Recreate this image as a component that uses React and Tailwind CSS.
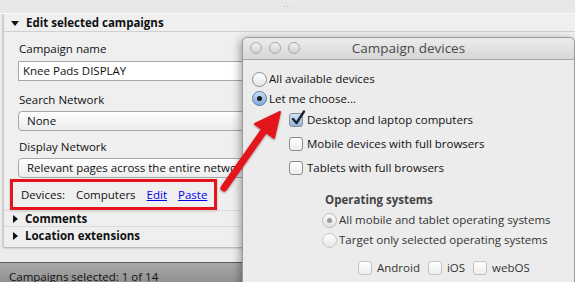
import React from "react";

function Radio({ checked, disabled }) {
  if (checked) {
    return (
      <span className={`inline-flex shrink-0 w-[15px] h-[15px] rounded-full items-center justify-center border ${disabled ? "border-[#bdbdbd] bg-gradient-to-b from-[#fafafa] to-[#e3e3e3]" : "border-[#5a7fa8] bg-gradient-to-b from-[#c9ddf4] to-[#7fa9dc]"}`}>
        <span className={`w-[5px] h-[5px] rounded-full ${disabled ? "bg-[#9a9a9a]" : "bg-[#1a1a1a]"}`} />
      </span>
    );
  }
  return (
    <span className={`inline-block shrink-0 w-[15px] h-[15px] rounded-full border ${disabled ? "border-[#c4c4c4]" : "border-[#8e8e8e]"} bg-gradient-to-b from-[#ffffff] to-[#e6e6e6]`} />
  );
}

function Check({ checked, disabled }) {
  return (
    <span className={`relative inline-block shrink-0 w-[14px] h-[14px] rounded-[3px] border ${disabled ? "border-[#c4c4c4]" : "border-[#8e8e8e]"} ${checked ? "bg-gradient-to-b from-[#d2e3f7] to-[#8fb4e0] border-[#5a7fa8]" : "bg-gradient-to-b from-[#ffffff] to-[#ededed]"}`}>
      {checked && (
        <svg className="absolute left-[1px] top-[-4px]" width="15" height="16" viewBox="0 0 15 16">
          <path d="M2 9 L5.5 13 L13 1.5" fill="none" stroke="#1c2433" strokeWidth="2.4" strokeLinecap="round" strokeLinejoin="round" />
        </svg>
      )}
    </span>
  );
}

function TriDown() {
  return <span className="inline-block w-0 h-0 border-l-[4px] border-r-[4px] border-t-[5px] border-l-transparent border-r-transparent border-t-[#111]" />;
}
function TriRight() {
  return <span className="inline-block w-0 h-0 border-t-[4px] border-b-[4px] border-l-[5px] border-t-transparent border-b-transparent border-l-[#111]" />;
}

export default function App() {
  return (
    <div className="relative w-[575px] h-[282px] overflow-hidden bg-[#ececec] text-[11.5px] text-[#111] whitespace-nowrap" style={{ fontFamily: '"Open Sans", "Lucida Grande", sans-serif' }}>
      <div className="flex flex-col h-[288px]">
        <div className="h-[14px] bg-[#e8e8e8] border-b border-b-white shrink-0 flex justify-center items-center">
          <div className="flex gap-[2px]">
            <span className="w-[1px] h-[1px] bg-[#bbb]" />
            <span className="w-[1px] h-[1px] bg-[#bbb]" />
            <span className="w-[1px] h-[1px] bg-[#bbb]" />
          </div>
        </div>
        <div className="flex-1 pl-[3px]">
          <div className="w-[640px] border-l border-[#c9c9c9] bg-[#efefef] shadow-[0_1px_2px_rgba(0,0,0,0.3)]">
            <div className="h-[18px] flex items-center gap-[7px] pl-[7px] pt-[1px] border-b border-[#d0d0d0] font-bold">
              <TriDown />
              <span>Edit selected campaigns</span>
            </div>
            <div className="pl-[14px]">
              <div className="h-[29px] pt-[9px] pl-[1px] leading-[15px]">Campaign name</div>
              <div className="h-[20px] bg-white border border-[#a7a7a7] pl-[4px] flex items-center">Knee Pads DISPLAY</div>
              <div className="h-[30px] pt-[11px] pl-[1px] leading-[15px]">Search Network</div>
              <div className="h-[20px] rounded-[4px] border border-[#a7a7a7] bg-gradient-to-b from-[#ffffff] to-[#ececec] pl-[8px] flex items-center">None</div>
              <div className="h-[27px] pt-[8px] pl-[1px] leading-[15px]">Display Network</div>
              <div className="h-[20px] rounded-[4px] border border-[#a7a7a7] bg-gradient-to-b from-[#ffffff] to-[#ececec] pl-[8px] flex items-center">Relevant pages across the entire network</div>
            </div>
            <div className="pl-[6px] pt-[1px] h-[32px]">
              <div className="w-[207px] h-[31px] border-[3px] border-[#e3141b] flex items-center pl-[8px] shadow-[0_1px_2px_rgba(0,0,0,0.3)]">
                <span>Devices:</span>
                <span className="ml-[11px]">Computers</span>
                <span className="ml-[11px] text-[#0000ee] underline">Edit</span>
                <span className="ml-[11px] text-[#0000ee] underline">Paste</span>
              </div>
            </div>
            <div className="h-[16px] flex items-center gap-[7px] pl-[9px] border-t border-[#dadada] font-bold">
              <TriRight />
              <span>Comments</span>
            </div>
            <div className="h-[21px] flex items-center gap-[7px] pl-[9px] pb-[2px] border-t border-[#dadada] font-bold">
              <TriRight />
              <span>Location extensions</span>
            </div>
          </div>
        </div>
        <div className="h-[26px] shrink-0 border-t border-[#5a5a5a] bg-gradient-to-b from-[#a9a9a9] to-[#8a8a8a] flex items-center pl-[9px] pt-[2px] text-[#111]">
          Campaigns selected: 1 of 14
        </div>
      </div>

      {/* Dialog window */}
      <div className="absolute left-[242px] top-[37px] w-[333px] h-[260px] rounded-t-[5px] border border-[#9a9a9a] bg-[#ececec] shadow-[-2px_2px_8px_rgba(0,0,0,0.35)]">
        <div className="relative h-[22px] rounded-t-[5px] bg-gradient-to-b from-[#ececec] to-[#d6d6d6] border-b border-[#a8a8a8] flex items-center justify-center">
          <div className="absolute left-[7px] top-[4px] flex gap-[7px]">
            <span className="w-[12px] h-[12px] rounded-full border border-[#a9a9a9] bg-gradient-to-b from-[#f2f2f2] to-[#d0d0d0]" />
            <span className="w-[12px] h-[12px] rounded-full border border-[#a9a9a9] bg-gradient-to-b from-[#f2f2f2] to-[#d0d0d0]" />
            <span className="w-[12px] h-[12px] rounded-full border border-[#a9a9a9] bg-gradient-to-b from-[#f2f2f2] to-[#d0d0d0]" />
          </div>
          <span className="text-[13.5px] text-[#4a4a4a]">Campaign devices</span>
        </div>
        <div className="pl-[9px] pt-[9px]">
          <div className="flex items-center gap-[2px] h-[20px]"><Radio /><span>All available devices</span></div>
          <div className="flex items-center gap-[2px] h-[19px]"><Radio checked /><span>Let me choose...</span></div>
          <div className="pl-[37px]">
            <div className="flex items-center gap-[4px] h-[24px]"><Check checked /><span>Desktop and laptop computers</span></div>
            <div className="flex items-center gap-[4px] h-[24px]"><Check /><span>Mobile devices with full browsers</span></div>
            <div className="flex items-center gap-[4px] h-[24px]"><Check /><span>Tablets with full browsers</span></div>
            <div className="pl-[33px] pt-[10px]">
              <div className="h-[20px] flex items-center pl-[3px] font-bold text-[#444]">Operating systems</div>
              <div className="flex items-center gap-[2px] h-[20px]"><Radio checked disabled /><span className="text-[#333]">All mobile and tablet operating systems</span></div>
              <div className="flex items-center gap-[2px] h-[20px]"><Radio disabled /><span className="text-[#333]">Target only selected operating systems</span></div>
              <div className="flex items-center pl-[36px] pt-[4px] h-[32px] text-[#333]">
                <Check disabled /><span className="ml-[5px]">Android</span>
                <span className="ml-[8px] flex"><Check disabled /></span><span className="ml-[5px]">iOS</span>
                <span className="ml-[8px] flex"><Check disabled /></span><span className="ml-[5px]">webOS</span>
              </div>
            </div>
          </div>
        </div>
      </div>

      {/* Red arrow */}
      <svg className="absolute left-0 top-0 pointer-events-none" width="575" height="282" viewBox="0 0 575 282">
        <defs>
          <filter id="sh" x="-20%" y="-20%" width="140%" height="140%">
            <feDropShadow dx="0" dy="1" stdDeviation="1" floodColor="#000" floodOpacity="0.4" />
          </filter>
        </defs>
        <g filter="url(#sh)">
          <line x1="224" y1="188" x2="266" y2="128" stroke="#e3141b" strokeWidth="7" strokeLinecap="round" />
          <polygon points="280,112 255,124 274,138" fill="#e3141b" stroke="#e3141b" strokeWidth="2" strokeLinejoin="round" />
        </g>
      </svg>
    </div>
  );
}
